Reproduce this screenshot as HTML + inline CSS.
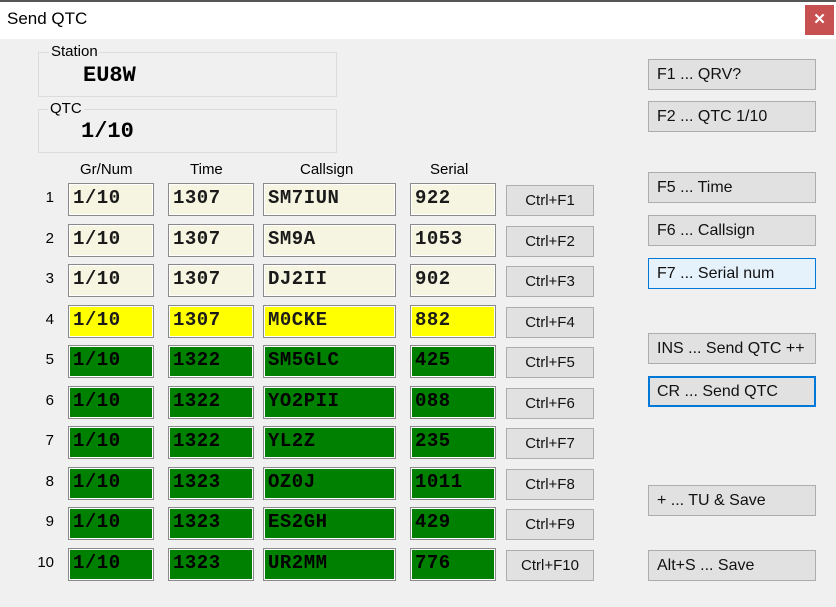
<!DOCTYPE html>
<html><head><style>
body{margin:0;width:836px;height:607px;background:#f0f0f0;position:relative;overflow:hidden;font-family:"Liberation Sans",sans-serif;}
.a{position:absolute;box-sizing:border-box}
.tb{left:0;top:0;width:836px;height:39px;background:#fff;border-top:2px solid #555}
.ttl{left:7px;top:9px;font-size:17px;color:#000}
.cls{left:805px;top:5px;width:29px;height:30px;background:#c75050;color:#fff;font-size:15px;font-weight:bold;text-align:center;line-height:29px}
.grp{border:1px solid #dcdcdc;}
.gl{font-size:15px;background:#f0f0f0;padding:0 2px;color:#000}
.big{font-family:"Liberation Mono",monospace;font-weight:bold;font-size:22px}
.f{height:33px;border:1px solid #8a8a8a;outline:1px solid #fff;outline-offset:-2px;font-family:"Liberation Mono",monospace;font-weight:bold;font-size:19px;line-height:29px;padding-left:4px;color:#1a1a1a;letter-spacing:0.5px}
.c{background:#f5f5e1}.y{background:#ff0;}.g{background:#008000;color:#000}
.b{background:#e1e1e1;border:1px solid #adadad;font-size:15px;color:#111;line-height:29px;height:31px}
.cb{width:88px;text-align:center;left:506px}
.rb{left:648px;width:168px;padding-left:8px;font-size:16px}
.n{font-size:15px;width:20px;text-align:right;left:34px}
.h{font-size:15px;top:161px}
</style></head><body>
<div class="a tb"></div>
<div class="a ttl">Send QTC</div>
<div class="a cls">✕</div>

<div class="a grp" style="left:38px;top:52px;width:299px;height:45px"></div>
<div class="a gl" style="left:49px;top:43px">Station</div>
<div class="a big" style="left:83px;top:63px">EU8W</div>
<div class="a grp" style="left:38px;top:109px;width:299px;height:44px"></div>
<div class="a gl" style="left:48px;top:100px">QTC</div>
<div class="a big" style="left:81px;top:119px">1/10</div>

<div class="a h" style="left:80px">Gr/Num</div>
<div class="a h" style="left:190px">Time</div>
<div class="a h" style="left:300px">Callsign</div>
<div class="a h" style="left:430px">Serial</div>

<div class="a n" style="top:189px">1</div>
<div class="a f c" style="left:68px;top:183px;width:86px">1/10</div><div class="a f c" style="left:168px;top:183px;width:86px">1307</div><div class="a f c" style="left:263px;top:183px;width:133px">SM7IUN</div><div class="a f c" style="left:410px;top:183px;width:86px">922</div><div class="a b cb" style="top:185px">Ctrl+F1</div>
<div class="a n" style="top:230px">2</div>
<div class="a f c" style="left:68px;top:224px;width:86px">1/10</div><div class="a f c" style="left:168px;top:224px;width:86px">1307</div><div class="a f c" style="left:263px;top:224px;width:133px">SM9A</div><div class="a f c" style="left:410px;top:224px;width:86px">1053</div><div class="a b cb" style="top:226px">Ctrl+F2</div>
<div class="a n" style="top:270px">3</div>
<div class="a f c" style="left:68px;top:264px;width:86px">1/10</div><div class="a f c" style="left:168px;top:264px;width:86px">1307</div><div class="a f c" style="left:263px;top:264px;width:133px">DJ2II</div><div class="a f c" style="left:410px;top:264px;width:86px">902</div><div class="a b cb" style="top:266px">Ctrl+F3</div>
<div class="a n" style="top:311px">4</div>
<div class="a f y" style="left:68px;top:305px;width:86px">1/10</div><div class="a f y" style="left:168px;top:305px;width:86px">1307</div><div class="a f y" style="left:263px;top:305px;width:133px">M0CKE</div><div class="a f y" style="left:410px;top:305px;width:86px">882</div><div class="a b cb" style="top:307px">Ctrl+F4</div>
<div class="a n" style="top:351px">5</div>
<div class="a f g" style="left:68px;top:345px;width:86px">1/10</div><div class="a f g" style="left:168px;top:345px;width:86px">1322</div><div class="a f g" style="left:263px;top:345px;width:133px">SM5GLC</div><div class="a f g" style="left:410px;top:345px;width:86px">425</div><div class="a b cb" style="top:347px">Ctrl+F5</div>
<div class="a n" style="top:392px">6</div>
<div class="a f g" style="left:68px;top:386px;width:86px">1/10</div><div class="a f g" style="left:168px;top:386px;width:86px">1322</div><div class="a f g" style="left:263px;top:386px;width:133px">YO2PII</div><div class="a f g" style="left:410px;top:386px;width:86px">088</div><div class="a b cb" style="top:388px">Ctrl+F6</div>
<div class="a n" style="top:432px">7</div>
<div class="a f g" style="left:68px;top:426px;width:86px">1/10</div><div class="a f g" style="left:168px;top:426px;width:86px">1322</div><div class="a f g" style="left:263px;top:426px;width:133px">YL2Z</div><div class="a f g" style="left:410px;top:426px;width:86px">235</div><div class="a b cb" style="top:428px">Ctrl+F7</div>
<div class="a n" style="top:473px">8</div>
<div class="a f g" style="left:68px;top:467px;width:86px">1/10</div><div class="a f g" style="left:168px;top:467px;width:86px">1323</div><div class="a f g" style="left:263px;top:467px;width:133px">OZ0J</div><div class="a f g" style="left:410px;top:467px;width:86px">1011</div><div class="a b cb" style="top:469px">Ctrl+F8</div>
<div class="a n" style="top:513px">9</div>
<div class="a f g" style="left:68px;top:507px;width:86px">1/10</div><div class="a f g" style="left:168px;top:507px;width:86px">1323</div><div class="a f g" style="left:263px;top:507px;width:133px">ES2GH</div><div class="a f g" style="left:410px;top:507px;width:86px">429</div><div class="a b cb" style="top:509px">Ctrl+F9</div>
<div class="a n" style="top:554px">10</div>
<div class="a f g" style="left:68px;top:548px;width:86px">1/10</div><div class="a f g" style="left:168px;top:548px;width:86px">1323</div><div class="a f g" style="left:263px;top:548px;width:133px">UR2MM</div><div class="a f g" style="left:410px;top:548px;width:86px">776</div><div class="a b cb" style="top:550px">Ctrl+F10</div>

<div class="a b rb" style="top:59px">F1 ... QRV?</div>
<div class="a b rb" style="top:101px">F2 ... QTC 1/10</div>
<div class="a b rb" style="top:172px">F5 ... Time</div>
<div class="a b rb" style="top:215px">F6 ... Callsign</div>
<div class="a b rb" style="top:258px;background:#e5f1fb;border-color:#0078d7">F7 ... Serial num</div>
<div class="a b rb" style="top:333px">INS ... Send QTC ++</div>
<div class="a b rb" style="top:376px;border:2px solid #0078d7;padding-left:7px;line-height:27px">CR ... Send QTC</div>
<div class="a b rb" style="top:485px">+ ... TU &amp; Save</div>
<div class="a b rb" style="top:550px">Alt+S ... Save</div>
</body></html>
